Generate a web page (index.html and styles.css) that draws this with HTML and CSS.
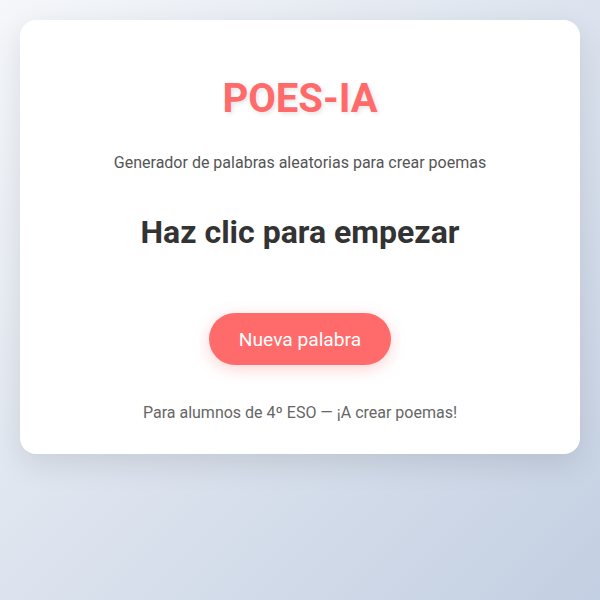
FILE: index.html
```html
<!DOCTYPE html>
<html lang="es">
<head>
    <meta charset="UTF-8">
    <meta name="viewport" content="width=device-width, initial-scale=1.0">
    <title>POES-IA</title>
    <link rel="stylesheet" href="styles.css">
</head>
<body>
<div class="container">
    <h1 class="title">POES-IA</h1>
    <p class="subtitle">Generador de palabras aleatorias para crear poemas</p>
    <div class="word" id="word">Haz clic para empezar</div>
    <button class="btn" id="btn">Nueva palabra</button>
    <p class="footer">Para alumnos de 4º ESO — ¡A crear poemas!</p>
</div>
</body>
</html>
```

FILE: styles.css
```css
html, body {
    height: 100%;
}

body {
    margin: 0;
    padding: 20px;
    box-sizing: border-box;
    font-family: Roboto, "Liberation Sans", sans-serif;
    background: linear-gradient(135deg, #f5f7fa 0%, #c3cfe2 100%);
}

.container {
    background: #fff;
    border-radius: 16px;
    padding: 55px 30px 29px;
    text-align: center;
    box-shadow: 0 10px 30px rgba(0, 0, 0, 0.1);
}

.title {
    margin: 0;
    font-size: 40px;
    line-height: 48px;
    font-weight: 700;
    color: #ff6b6b;
    text-shadow: 2px 2px 4px rgba(0, 0, 0, 0.1);
}

.subtitle {
    margin: 28px 0 0;
    font-size: 16px;
    line-height: 24px;
    color: #555;
}

.word {
    margin: 38px 0 0;
    font-size: 32px;
    line-height: 38px;
    font-weight: 700;
    color: #333;
}

.btn {
    margin-top: 62px;
    padding: 0 30px;
    height: 52px;
    border: none;
    border-radius: 26px;
    background: #ff6b6b;
    color: #fff;
    font-family: inherit;
    font-size: 19.2px;
    box-shadow: 0 4px 15px rgba(255, 107, 107, 0.3);
    cursor: pointer;
}

.footer {
    margin: 36px 0 0;
    font-size: 16px;
    line-height: 24px;
    color: #666;
}
```
